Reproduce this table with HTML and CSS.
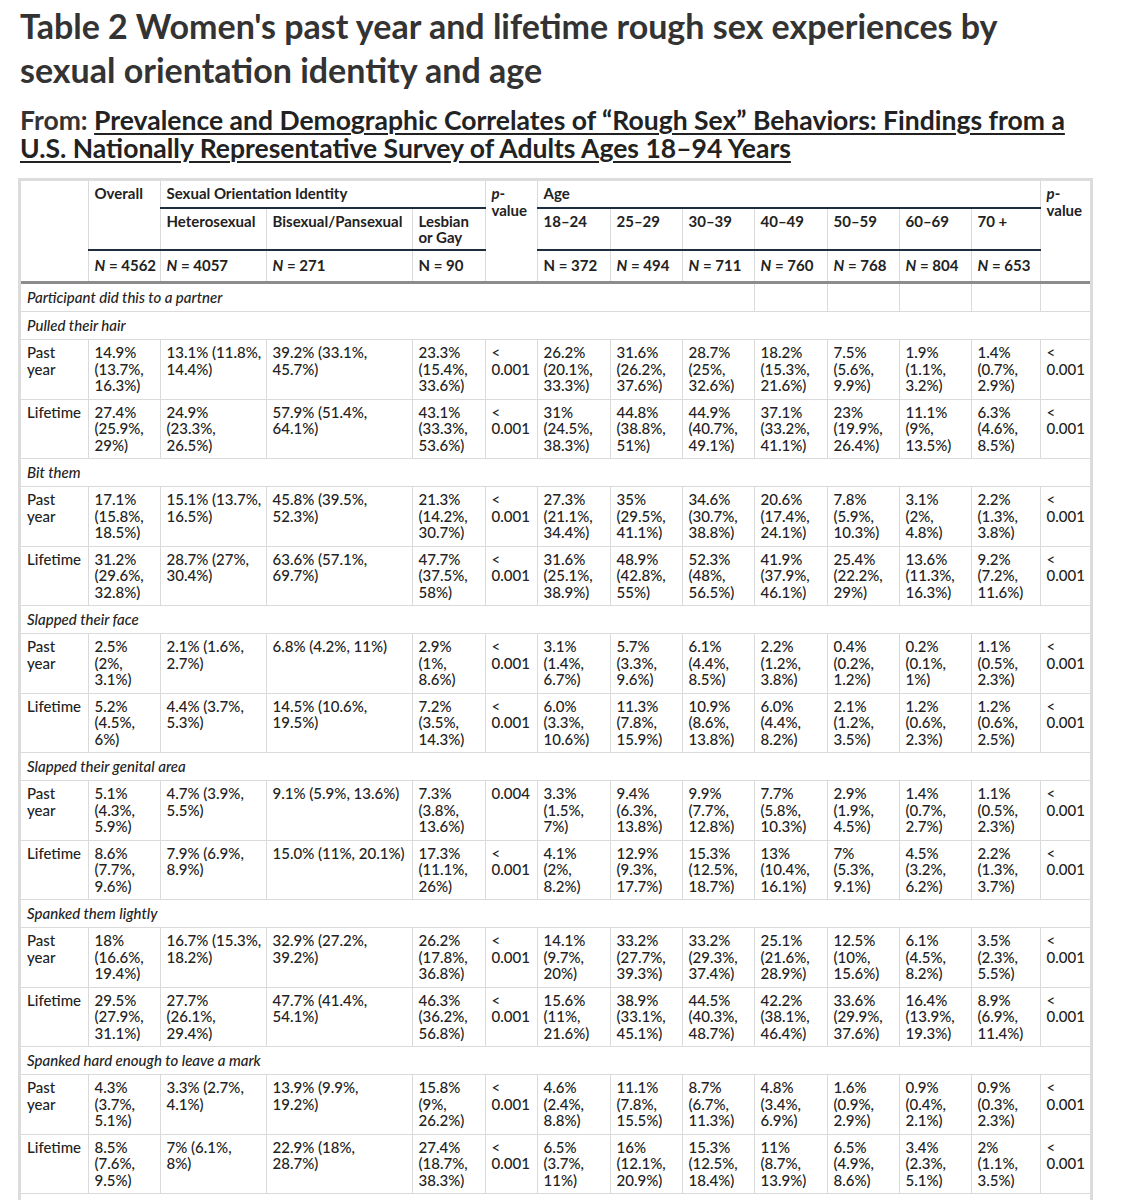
FILE: index.html
```html
<!DOCTYPE html>
<html lang="en">
<head>
<meta charset="utf-8">
<title>Table 2</title>
<link rel="stylesheet" href="styles.css">
</head>
<body>
<div class="page">
  <h1 class="title">Table 2 Women's past year and lifetime rough sex experiences by<br>sexual orientation identity and age</h1>
  <h2 class="from">From: <a href="#">Prevalence and Demographic Correlates of “Rough Sex” Behaviors: Findings from a<br>U.S. Nationally Representative Survey of Adults Ages 18–94 Years</a></h2>
  <div class="tbl">
    <table>
      <colgroup>
        <col class="c-lab"><col class="c-ov"><col class="c-het"><col class="c-bi"><col class="c-les"><col class="c-p">
        <col class="c-a1"><col class="c-a2"><col class="c-a3"><col class="c-a4"><col class="c-a5"><col class="c-a6"><col class="c-a7"><col class="c-p2">
      </colgroup>
      <thead>
        <tr class="h1">
          <th rowspan="3"></th>
          <th rowspan="2" class="navy">Overall</th>
          <th colspan="3" class="navy">Sexual Orientation Identity</th>
          <th rowspan="3"><i>p</i>-<br>value</th>
          <th colspan="7" class="navy">Age</th>
          <th rowspan="3"><i>p</i>-<br>value</th>
        </tr>
        <tr class="h2">
          <th class="navy">Heterosexual</th>
          <th class="navy">Bisexual/Pansexual</th>
          <th class="navy">Lesbian<br>or Gay</th>
          <th class="navy">18–24</th>
          <th class="navy">25–29</th>
          <th class="navy">30–39</th>
          <th class="navy">40–49</th>
          <th class="navy">50–59</th>
          <th class="navy">60–69</th>
          <th class="navy">70 +</th>
        </tr>
        <tr class="h3">
          <th><i>N</i> = 4562</th>
          <th><i>N</i> = 4057</th>
          <th><i>N</i> = 271</th>
          <th>N = 90</th>
          <th>N = 372</th>
          <th><i>N</i> = 494</th>
          <th><i>N</i> = 711</th>
          <th><i>N</i> = 760</th>
          <th><i>N</i> = 768</th>
          <th><i>N</i> = 804</th>
          <th><i>N</i> = 653</th>
        </tr>
      </thead>
      <tbody>
        <tr class="sec"><td colspan="9">Participant did this to a partner</td><td></td><td></td><td></td><td></td><td></td></tr>
        <tr class="sec"><td colspan="14">Pulled their hair</td></tr>
        <tr>
          <td>Past<br>year</td><td>14.9%<br>(13.7%,<br>16.3%)</td><td>13.1% (11.8%,<br>14.4%)</td><td>39.2% (33.1%,<br>45.7%)</td><td>23.3%<br>(15.4%,<br>33.6%)</td><td>&lt;<br>0.001</td>
          <td>26.2%<br>(20.1%,<br>33.3%)</td><td>31.6%<br>(26.2%,<br>37.6%)</td><td>28.7%<br>(25%,<br>32.6%)</td><td>18.2%<br>(15.3%,<br>21.6%)</td><td>7.5%<br>(5.6%,<br>9.9%)</td><td>1.9%<br>(1.1%,<br>3.2%)</td><td>1.4%<br>(0.7%,<br>2.9%)</td><td>&lt;<br>0.001</td>
        </tr>
        <tr>
          <td>Lifetime</td><td>27.4%<br>(25.9%,<br>29%)</td><td>24.9%<br>(23.3%,<br>26.5%)</td><td>57.9% (51.4%,<br>64.1%)</td><td>43.1%<br>(33.3%,<br>53.6%)</td><td>&lt;<br>0.001</td>
          <td>31%<br>(24.5%,<br>38.3%)</td><td>44.8%<br>(38.8%,<br>51%)</td><td>44.9%<br>(40.7%,<br>49.1%)</td><td>37.1%<br>(33.2%,<br>41.1%)</td><td>23%<br>(19.9%,<br>26.4%)</td><td>11.1%<br>(9%,<br>13.5%)</td><td>6.3%<br>(4.6%,<br>8.5%)</td><td>&lt;<br>0.001</td>
        </tr>
        <tr class="sec"><td colspan="14">Bit them</td></tr>
        <tr>
          <td>Past<br>year</td><td>17.1%<br>(15.8%,<br>18.5%)</td><td>15.1% (13.7%,<br>16.5%)</td><td>45.8% (39.5%,<br>52.3%)</td><td>21.3%<br>(14.2%,<br>30.7%)</td><td>&lt;<br>0.001</td>
          <td>27.3%<br>(21.1%,<br>34.4%)</td><td>35%<br>(29.5%,<br>41.1%)</td><td>34.6%<br>(30.7%,<br>38.8%)</td><td>20.6%<br>(17.4%,<br>24.1%)</td><td>7.8%<br>(5.9%,<br>10.3%)</td><td>3.1%<br>(2%,<br>4.8%)</td><td>2.2%<br>(1.3%,<br>3.8%)</td><td>&lt;<br>0.001</td>
        </tr>
        <tr>
          <td>Lifetime</td><td>31.2%<br>(29.6%,<br>32.8%)</td><td>28.7% (27%,<br>30.4%)</td><td>63.6% (57.1%,<br>69.7%)</td><td>47.7%<br>(37.5%,<br>58%)</td><td>&lt;<br>0.001</td>
          <td>31.6%<br>(25.1%,<br>38.9%)</td><td>48.9%<br>(42.8%,<br>55%)</td><td>52.3%<br>(48%,<br>56.5%)</td><td>41.9%<br>(37.9%,<br>46.1%)</td><td>25.4%<br>(22.2%,<br>29%)</td><td>13.6%<br>(11.3%,<br>16.3%)</td><td>9.2%<br>(7.2%,<br>11.6%)</td><td>&lt;<br>0.001</td>
        </tr>
        <tr class="sec"><td colspan="14">Slapped their face</td></tr>
        <tr>
          <td>Past<br>year</td><td>2.5%<br>(2%,<br>3.1%)</td><td>2.1% (1.6%,<br>2.7%)</td><td>6.8% (4.2%, 11%)</td><td>2.9%<br>(1%,<br>8.6%)</td><td>&lt;<br>0.001</td>
          <td>3.1%<br>(1.4%,<br>6.7%)</td><td>5.7%<br>(3.3%,<br>9.6%)</td><td>6.1%<br>(4.4%,<br>8.5%)</td><td>2.2%<br>(1.2%,<br>3.8%)</td><td>0.4%<br>(0.2%,<br>1.2%)</td><td>0.2%<br>(0.1%,<br>1%)</td><td>1.1%<br>(0.5%,<br>2.3%)</td><td>&lt;<br>0.001</td>
        </tr>
        <tr>
          <td>Lifetime</td><td>5.2%<br>(4.5%,<br>6%)</td><td>4.4% (3.7%,<br>5.3%)</td><td>14.5% (10.6%,<br>19.5%)</td><td>7.2%<br>(3.5%,<br>14.3%)</td><td>&lt;<br>0.001</td>
          <td>6.0%<br>(3.3%,<br>10.6%)</td><td>11.3%<br>(7.8%,<br>15.9%)</td><td>10.9%<br>(8.6%,<br>13.8%)</td><td>6.0%<br>(4.4%,<br>8.2%)</td><td>2.1%<br>(1.2%,<br>3.5%)</td><td>1.2%<br>(0.6%,<br>2.3%)</td><td>1.2%<br>(0.6%,<br>2.5%)</td><td>&lt;<br>0.001</td>
        </tr>
        <tr class="sec"><td colspan="14">Slapped their genital area</td></tr>
        <tr>
          <td>Past<br>year</td><td>5.1%<br>(4.3%,<br>5.9%)</td><td>4.7% (3.9%,<br>5.5%)</td><td>9.1% (5.9%, 13.6%)</td><td>7.3%<br>(3.8%,<br>13.6%)</td><td>0.004</td>
          <td>3.3%<br>(1.5%,<br>7%)</td><td>9.4%<br>(6.3%,<br>13.8%)</td><td>9.9%<br>(7.7%,<br>12.8%)</td><td>7.7%<br>(5.8%,<br>10.3%)</td><td>2.9%<br>(1.9%,<br>4.5%)</td><td>1.4%<br>(0.7%,<br>2.7%)</td><td>1.1%<br>(0.5%,<br>2.3%)</td><td>&lt;<br>0.001</td>
        </tr>
        <tr>
          <td>Lifetime</td><td>8.6%<br>(7.7%,<br>9.6%)</td><td>7.9% (6.9%,<br>8.9%)</td><td>15.0% (11%, 20.1%)</td><td>17.3%<br>(11.1%,<br>26%)</td><td>&lt;<br>0.001</td>
          <td>4.1%<br>(2%,<br>8.2%)</td><td>12.9%<br>(9.3%,<br>17.7%)</td><td>15.3%<br>(12.5%,<br>18.7%)</td><td>13%<br>(10.4%,<br>16.1%)</td><td>7%<br>(5.3%,<br>9.1%)</td><td>4.5%<br>(3.2%,<br>6.2%)</td><td>2.2%<br>(1.3%,<br>3.7%)</td><td>&lt;<br>0.001</td>
        </tr>
        <tr class="sec"><td colspan="14">Spanked them lightly</td></tr>
        <tr>
          <td>Past<br>year</td><td>18%<br>(16.6%,<br>19.4%)</td><td>16.7% (15.3%,<br>18.2%)</td><td>32.9% (27.2%,<br>39.2%)</td><td>26.2%<br>(17.8%,<br>36.8%)</td><td>&lt;<br>0.001</td>
          <td>14.1%<br>(9.7%,<br>20%)</td><td>33.2%<br>(27.7%,<br>39.3%)</td><td>33.2%<br>(29.3%,<br>37.4%)</td><td>25.1%<br>(21.6%,<br>28.9%)</td><td>12.5%<br>(10%,<br>15.6%)</td><td>6.1%<br>(4.5%,<br>8.2%)</td><td>3.5%<br>(2.3%,<br>5.5%)</td><td>&lt;<br>0.001</td>
        </tr>
        <tr>
          <td>Lifetime</td><td>29.5%<br>(27.9%,<br>31.1%)</td><td>27.7%<br>(26.1%,<br>29.4%)</td><td>47.7% (41.4%,<br>54.1%)</td><td>46.3%<br>(36.2%,<br>56.8%)</td><td>&lt;<br>0.001</td>
          <td>15.6%<br>(11%,<br>21.6%)</td><td>38.9%<br>(33.1%,<br>45.1%)</td><td>44.5%<br>(40.3%,<br>48.7%)</td><td>42.2%<br>(38.1%,<br>46.4%)</td><td>33.6%<br>(29.9%,<br>37.6%)</td><td>16.4%<br>(13.9%,<br>19.3%)</td><td>8.9%<br>(6.9%,<br>11.4%)</td><td>&lt;<br>0.001</td>
        </tr>
        <tr class="sec"><td colspan="14">Spanked hard enough to leave a mark</td></tr>
        <tr>
          <td>Past<br>year</td><td>4.3%<br>(3.7%,<br>5.1%)</td><td>3.3% (2.7%,<br>4.1%)</td><td>13.9% (9.9%,<br>19.2%)</td><td>15.8%<br>(9%,<br>26.2%)</td><td>&lt;<br>0.001</td>
          <td>4.6%<br>(2.4%,<br>8.8%)</td><td>11.1%<br>(7.8%,<br>15.5%)</td><td>8.7%<br>(6.7%,<br>11.3%)</td><td>4.8%<br>(3.4%,<br>6.9%)</td><td>1.6%<br>(0.9%,<br>2.9%)</td><td>0.9%<br>(0.4%,<br>2.1%)</td><td>0.9%<br>(0.3%,<br>2.3%)</td><td>&lt;<br>0.001</td>
        </tr>
        <tr>
          <td>Lifetime</td><td>8.5%<br>(7.6%,<br>9.5%)</td><td>7% (6.1%,<br>8%)</td><td>22.9% (18%,<br>28.7%)</td><td>27.4%<br>(18.7%,<br>38.3%)</td><td>&lt;<br>0.001</td>
          <td>6.5%<br>(3.7%,<br>11%)</td><td>16%<br>(12.1%,<br>20.9%)</td><td>15.3%<br>(12.5%,<br>18.4%)</td><td>11%<br>(8.7%,<br>13.9%)</td><td>6.5%<br>(4.9%,<br>8.6%)</td><td>3.4%<br>(2.3%,<br>5.1%)</td><td>2%<br>(1.1%,<br>3.5%)</td><td>&lt;<br>0.001</td>
        </tr>
        <tr class="sec"><td colspan="14">&nbsp;</td></tr>
      </tbody>
    </table>
  </div>
</div>
</body>
</html>
```
FILE: styles.css
```css
html, body {
  margin: 0;
  padding: 0;
  background: #fff;
}
body {
  font-family: Lato, "Noto Sans", sans-serif;
  color: #333;
}
.page {
  padding: 4px 0 0 18px;
}
.title {
  margin: 0 0 0 2px;
  font-size: 34px;
  font-weight: 700;
  line-height: 44px;
  color: #333;
}
.from {
  margin: 14px 0 0 2px;
  font-size: 26.5px;
  font-weight: 700;
  line-height: 28px;
  color: #333;
}
.from a {
  color: #222;
  text-decoration: underline;
  text-decoration-thickness: 2px;
  text-underline-offset: 3px;
}
.tbl {
  margin-top: 16px;
  width: fit-content;
  border: 3px solid #dcdcdc;
}
table {
  border-collapse: collapse;
  border-style: hidden;
  table-layout: fixed;
  width: 1069px;
  font-size: 15px;
  line-height: 16.5px;
  color: #222;
}
.c-lab { width: 67px; }
.c-ov { width: 72px; }
.c-het { width: 106px; }
.c-bi { width: 146px; }
.c-les { width: 73px; }
.c-p { width: 52px; }
.c-a1 { width: 73px; }
.c-a2 { width: 72px; }
.c-a3 { width: 72px; }
.c-a4 { width: 73px; }
.c-a5 { width: 72px; }
.c-a6 { width: 72px; }
.c-a7 { width: 69px; }
.c-p2 { width: 50px; }
th, td {
  border: 1px solid #dadada;
  text-align: left;
  vertical-align: top;
  white-space: nowrap;
}
th {
  font-weight: 700;
  padding: 4px 4px 5px 6px;
}
.h2 th {
  padding: 4px 4px 3px 6px;
}
.h3 th {
  padding: 6px 4px 8px 6px;
}
th.navy {
  border-bottom: 2px solid #1d2e3f;
}
thead {
  border-bottom: 3px solid #8c8c8c;
}
td {
  padding: 4px 4px 5px 6px;
  font-weight: 500;
}
.sec td {
  font-style: italic;
  padding: 5px 6px 5.5px 6px;
}
```
